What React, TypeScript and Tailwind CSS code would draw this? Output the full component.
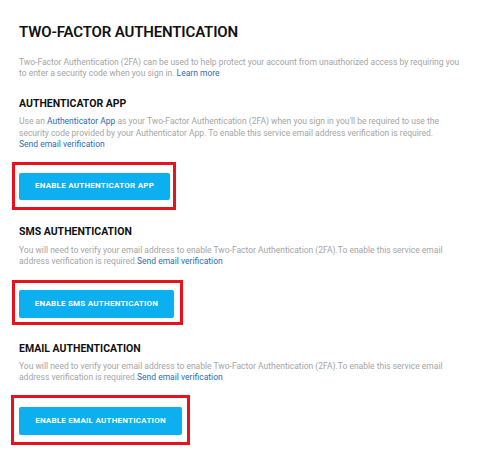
const link = 'text-[#2d6cb5]'
const body = 'text-[8.5px] leading-[11.5px] text-[#a5a5a5] whitespace-nowrap'
const heading = 'text-[10.5px] font-bold leading-[13px] text-[#111]'

function Highlight({ className, children }: { className: string; children: React.ReactNode }) {
  return <div className={'inline-block border-[3px] border-[#e8121c] ' + className}>{children}</div>
}

function EnableButton({ label, className }: { label: string; className: string }) {
  return (
    <button
      className={
        'block rounded-[2px] bg-[#0cafef] text-center text-[8px] font-bold tracking-[0.03em] text-white ' + className
      }
    >
      {label}
    </button>
  )
}

export default function App() {
  return (
    <div className="min-h-[457px] w-[480px] bg-white pl-[19px] pr-[4px] pt-[23px] font-['Roboto',sans-serif]">
      <h1 className="text-[15px] font-semibold leading-[18px] tracking-[-0.01em] text-[#111]">
        TWO-FACTOR AUTHENTICATION
      </h1>

      <p className={'mt-[16px] !leading-[11px] ' + body}>
        Two-Factor Authentication (2FA) can be used to help protect your account from unauthorized access by requiring you
        <br />
        to enter a security code when you sign in. <a href="#" className={link}>Learn more</a>
      </p>

      <h2 className={'mt-[18px] ' + heading}>AUTHENTICATOR APP</h2>
      <p className={'mt-[6px] ' + body}>
        Use an <a href="#" className={link}>Authenticator App</a> as your Two-Factor Authentication (2FA) when you sign in
        you'll be required to use the
        <br />
        security code provided by your Authenticator App. To enable this service email address verification is required.
        <br />
        <a href="#" className={link}>Send email verification</a>
      </p>

      <div className="-ml-[7px] mt-[11px]">
        <Highlight className="pl-[4px] pr-[3px] pt-[8px] pb-[7px]">
          <EnableButton label="ENABLE AUTHENTICATOR APP" className="h-[27px] w-[151px]" />
        </Highlight>
      </div>

      <h2 className={'mt-[15px] ' + heading}>SMS AUTHENTICATION</h2>
      <p className={'mt-[7px] ' + body}>
        You will need to verify your email address to enable Two-Factor Authentication (2FA).To enable this service email
        <br />
        address verification is required.<a href="#" className={link}>Send email verification</a>
      </p>

      <div className="-ml-[7px] mt-[12px]">
        <Highlight className="pl-[4px] pr-[6px] pt-[7px] pb-[4px]">
          <EnableButton label="ENABLE SMS AUTHENTICATION" className="h-[28px] w-[155px]" />
        </Highlight>
      </div>

      <h2 className={'mt-[17px] ' + heading}>EMAIL AUTHENTICATION</h2>
      <p className={'mt-[6px] ' + body}>
        You will need to verify your email address to enable Two-Factor Authentication (2FA).To enable this service email
        <br />
        address verification is required.<a href="#" className={link}>Send email verification</a>
      </p>

      <div className="-ml-[8px] mt-[11px]">
        <Highlight className="pl-[5px] pr-[5px] pt-[9px] pb-[7px]">
          <EnableButton label="ENABLE EMAIL AUTHENTICATION" className="h-[28px] w-[163px]" />
        </Highlight>
      </div>
    </div>
  )
}
